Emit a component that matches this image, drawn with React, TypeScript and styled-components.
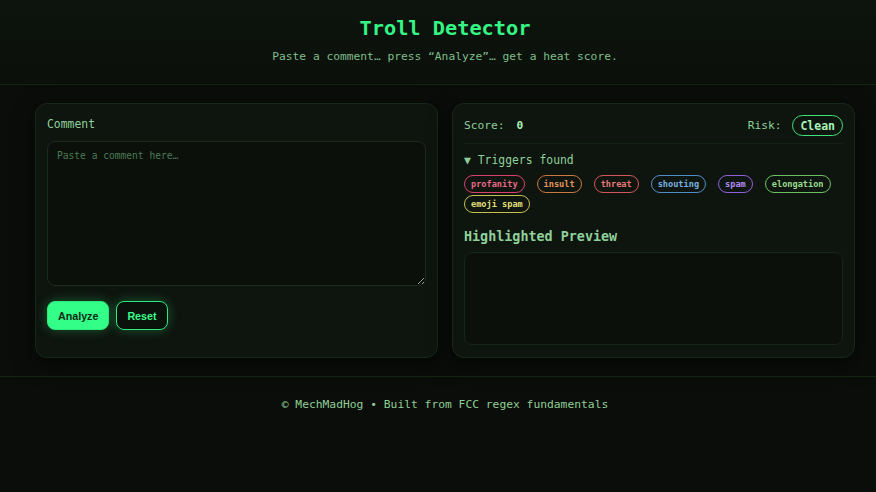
import React from "react";
import styled, { createGlobalStyle } from "styled-components";

const GlobalStyle = createGlobalStyle`
  html, body { margin: 0; padding: 0; background: #0a0d0a; }
  body {
    font-family: "DejaVu Sans Mono", "Liberation Mono", monospace;
    color: #8fd19a;
    min-height: 492px;
  }
  * { box-sizing: border-box; }
`;

const Header = styled.header`
  padding: 16px 0 20px 14px;
  text-align: center;
  background: linear-gradient(180deg, #0d130d 0%, #0b100b 100%);
  border-bottom: 1px solid #152615;
`;

const Title = styled.h1`
  margin: 0;
  font-size: 20.3px;
  line-height: 24px;
  font-weight: 700;
  color: #35f585;
`;

const Subtitle = styled.p`
  margin: 9px 0 0;
  font-size: 11.25px;
  line-height: 15px;
  color: #7fbf8a;
`;

const Main = styled.main`
  display: grid;
  grid-template-columns: 403px 403px;
  gap: 14px;
  padding: 18px 21px 18px 35px;
  border-bottom: 1px solid #152615;
`;

const Card = styled.section`
  background: #0e140e;
  border: 1px solid #182818;
  border-radius: 12px;
  padding: 13px 11px 12px;
  box-shadow: 0 6px 22px rgba(0, 0, 0, 0.55);
  display: flex;
  flex-direction: column;
`;

const Label = styled.label`
  font-size: 11.4px;
  line-height: 15px;
  color: #8fd19a;
  margin-bottom: 9px;
`;

const TextArea = styled.textarea`
  width: 100%;
  height: 145px;
  background: #0b100b;
  border: 1px solid #1a2c1a;
  border-radius: 8px;
  padding: 8px 9px;
  font-family: "DejaVu Sans Mono", "Liberation Mono", monospace;
  font-size: 9.6px;
  color: #8fd19a;
  outline: none;
  resize: vertical;
  &::placeholder { color: #4b7a53; }
`;

const ButtonRow = styled.div`
  display: flex;
  gap: 7px;
  margin-top: 15px;
`;

const Button = styled.button<{ $primary?: boolean }>`
  height: 29px;
  padding: 0 10px;
  border-radius: 8px;
  font-family: "Liberation Sans", Arial, sans-serif;
  font-weight: 700;
  font-size: 10.7px;
  cursor: pointer;
  border: 1.5px solid #2ee97c;
  background: ${(p) => (p.$primary ? "#33ff88" : "#0b110b")};
  color: ${(p) => (p.$primary ? "#0c2a15" : "#3cff8c")};
  box-shadow: 0 0 12px rgba(51, 255, 136, 0.3);
`;

const ScoreRow = styled.div`
  display: flex;
  align-items: center;
  justify-content: space-between;
  padding: 0 0 7px;
  margin-top: -2px;
  border-bottom: 1px solid #142214;
`;

const Stat = styled.div`
  display: flex;
  align-items: center;
  font-size: 11.2px;
  color: #8fd19a;
`;

const ScoreValue = styled.strong`
  margin-left: 12px;
  color: #a6f2b4;
  font-size: 11.2px;
`;

const RiskPill = styled.span`
  margin-left: 11px;
  height: 21px;
  padding: 0 7px;
  display: inline-flex;
  align-items: center;
  border: 1.5px solid #3ee37a;
  border-radius: 11px;
  font-weight: 700;
  font-size: 11.5px;
  color: #a8f5b8;
`;

const Triggers = styled.div`
  margin-top: 9px;
  font-size: 11.4px;
  line-height: 15px;
  color: #8fd19a;
`;

const TagList = styled.div`
  display: flex;
  flex-wrap: wrap;
  column-gap: 12px;
  row-gap: 2px;
  margin-top: 7px;
`;

const Tag = styled.span<{ $c: string; $t: string }>`
  display: inline-flex;
  align-items: center;
  height: 18px;
  padding: 0 6px;
  border: 1px solid ${(p) => p.$c};
  border-radius: 9px;
  font-size: 8.6px;
  font-weight: 700;
  color: ${(p) => p.$t};
`;

const PreviewTitle = styled.h3`
  margin: 15px 0 0;
  font-size: 13.4px;
  line-height: 17px;
  font-weight: 700;
  color: #8fd19a;
`;

const PreviewBox = styled.div`
  margin-top: 7px;
  height: 93px;
  background: #0b100b;
  border: 1px solid #172717;
  border-radius: 8px;
`;

const Footer = styled.footer`
  padding: 20px 0 19px 14px;
  text-align: center;
  font-size: 11.3px;
  line-height: 15px;
  color: #8fcf95;
`;

const tags = [
  { name: "profanity", c: "#d9406a", t: "#e56a86" },
  { name: "insult", c: "#c9783e", t: "#e1955e" },
  { name: "threat", c: "#d0585a", t: "#e57a78" },
  { name: "shouting", c: "#4f8fc6", t: "#78b0e0" },
  { name: "spam", c: "#9160d8", t: "#b28bef" },
  { name: "elongation", c: "#6fc064", t: "#98dc8c" },
  { name: "emoji spam", c: "#c2c24c", t: "#e0df7a" },
];

export default function App() {
  return (
    <>
      <GlobalStyle />
      <Header>
        <Title>Troll Detector</Title>
        <Subtitle>Paste a comment… press “Analyze”… get a heat score.</Subtitle>
      </Header>
      <Main>
        <Card>
          <Label htmlFor="comment">Comment</Label>
          <TextArea id="comment" placeholder="Paste a comment here…" />
          <ButtonRow>
            <Button $primary>Analyze</Button>
            <Button>Reset</Button>
          </ButtonRow>
        </Card>
        <Card>
          <ScoreRow>
            <Stat>
              Score:<ScoreValue>0</ScoreValue>
            </Stat>
            <Stat>
              Risk:<RiskPill>Clean</RiskPill>
            </Stat>
          </ScoreRow>
          <Triggers>▼ Triggers found</Triggers>
          <TagList>
            {tags.map((t) => (
              <Tag key={t.name} $c={t.c} $t={t.t}>
                {t.name}
              </Tag>
            ))}
          </TagList>
          <PreviewTitle>Highlighted Preview</PreviewTitle>
          <PreviewBox />
        </Card>
      </Main>
      <Footer>© MechMadHog • Built from FCC regex fundamentals</Footer>
    </>
  );
}
